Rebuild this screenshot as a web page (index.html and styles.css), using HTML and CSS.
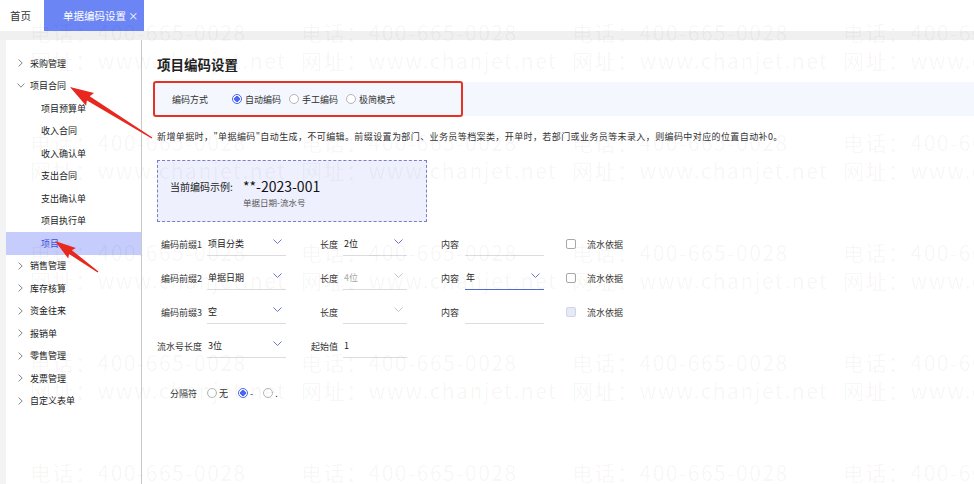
FILE: index.html
```html
<!DOCTYPE html>
<html lang="zh-CN">
<head>
  <meta charset="UTF-8">
  <title>单据编码设置</title>
  <link rel="stylesheet" href="styles.css">
</head>
<body>
  <div class="tabs">
    <div class="tab">首页</div>
    <div class="tab active">单据编码设置 <span class="close">×</span></div>
  </div>
  <div class="band"></div>

  <div class="layout">
    <div class="sidebar">
      <div class="menu-item"><svg class="chev" viewBox="0 0 5 8"><path d="M.6.6 4.2 4 .6 7.4"/></svg>采购管理</div>
      <div class="menu-item"><svg class="chev down" viewBox="0 0 8 5"><path d="M.6.6 4 4.2 7.4.6"/></svg>项目合同</div>
      <div class="menu-item sub">项目预算单</div>
      <div class="menu-item sub">收入合同</div>
      <div class="menu-item sub">收入确认单</div>
      <div class="menu-item sub">支出合同</div>
      <div class="menu-item sub">支出确认单</div>
      <div class="menu-item sub">项目执行单</div>
      <div class="menu-item sub active">项目</div>
      <div class="menu-item"><svg class="chev" viewBox="0 0 5 8"><path d="M.6.6 4.2 4 .6 7.4"/></svg>销售管理</div>
      <div class="menu-item"><svg class="chev" viewBox="0 0 5 8"><path d="M.6.6 4.2 4 .6 7.4"/></svg>库存核算</div>
      <div class="menu-item"><svg class="chev" viewBox="0 0 5 8"><path d="M.6.6 4.2 4 .6 7.4"/></svg>资金往来</div>
      <div class="menu-item"><svg class="chev" viewBox="0 0 5 8"><path d="M.6.6 4.2 4 .6 7.4"/></svg>报销单</div>
      <div class="menu-item"><svg class="chev" viewBox="0 0 5 8"><path d="M.6.6 4.2 4 .6 7.4"/></svg>零售管理</div>
      <div class="menu-item"><svg class="chev" viewBox="0 0 5 8"><path d="M.6.6 4.2 4 .6 7.4"/></svg>发票管理</div>
      <div class="menu-item"><svg class="chev" viewBox="0 0 5 8"><path d="M.6.6 4.2 4 .6 7.4"/></svg>自定义表单</div>
    </div>

    <div class="content">
      <h2 class="title">项目编码设置</h2>

      <div class="mode-row">
        <span class="mode-label">编码方式</span>
        <label class="radio checked"><i></i>自动编码</label>
        <label class="radio"><i></i>手工编码</label>
        <label class="radio"><i></i>极简模式</label>
      </div>

      <p class="desc">新增单据时，"单据编码"自动生成，不可编辑。前缀设置为部门、业务员等档案类，开单时，若部门或业务员等未录入，则编码中对应的位置自动补0。</p>

      <div class="example">
        <div class="example-main"><span class="example-label">当前编码示例:</span><span class="example-value">**-2023-001</span></div>
        <div class="example-sub">单据日期-流水号</div>
      </div>

      <div class="form">
        <div class="form-row">
          <span class="lbl">编码前缀1</span>
          <div class="field">项目分类<svg class="arrow" viewBox="0 0 9 5"><path d="M.5.5 4.5 4.5 8.5.5"/></svg></div>
          <span class="lbl lbl2">长度</span>
          <div class="field short">2位<svg class="arrow" viewBox="0 0 9 5"><path d="M.5.5 4.5 4.5 8.5.5"/></svg></div>
          <span class="lbl lbl3">内容</span>
          <div class="field"></div>
          <span class="check"></span><span>流水依据</span>
        </div>
        <div class="form-row">
          <span class="lbl">编码前缀2</span>
          <div class="field">单据日期<svg class="arrow" viewBox="0 0 9 5"><path d="M.5.5 4.5 4.5 8.5.5"/></svg></div>
          <span class="lbl lbl2">长度</span>
          <div class="field short disabled">4位<svg class="arrow" viewBox="0 0 9 5"><path d="M.5.5 4.5 4.5 8.5.5"/></svg></div>
          <span class="lbl lbl3">内容</span>
          <div class="field focus">年<svg class="arrow" viewBox="0 0 9 5"><path d="M.5.5 4.5 4.5 8.5.5"/></svg></div>
          <span class="check"></span><span>流水依据</span>
        </div>
        <div class="form-row">
          <span class="lbl">编码前缀3</span>
          <div class="field">空<svg class="arrow" viewBox="0 0 9 5"><path d="M.5.5 4.5 4.5 8.5.5"/></svg></div>
          <span class="lbl lbl2">长度</span>
          <div class="field short disabled"><span></span><svg class="arrow" viewBox="0 0 9 5"><path d="M.5.5 4.5 4.5 8.5.5"/></svg></div>
          <span class="lbl lbl3">内容</span>
          <div class="field"></div>
          <span class="check disabled"></span><span>流水依据</span>
        </div>
        <div class="form-row">
          <span class="lbl">流水号长度</span>
          <div class="field">3位<svg class="arrow" viewBox="0 0 9 5"><path d="M.5.5 4.5 4.5 8.5.5"/></svg></div>
          <span class="lbl lbl2">起始值</span>
          <div class="field short">1</div>
        </div>
        <div class="sep-row">
          <span class="sep-label">分隔符</span>
          <label class="radio"><i></i>无</label>
          <label class="radio checked"><i></i>-</label>
          <label class="radio"><i></i>.</label>
        </div>
      </div>
    </div>
  </div>

  <div class="watermark" id="watermark"></div>

  <div class="red-box"></div>
  <svg class="arrows" viewBox="0 0 974 484">
    <g transform="translate(152 138) rotate(211.9)">
      <polygon points="0,-0.7 75,-2.6 73,-7.5 96.6,0 73,7.5 75,2.6 0,0.7"/>
    </g>
    <g transform="translate(98 272) rotate(215.8)">
      <polygon points="0,-0.7 34,-2.4 32,-6.5 53,0 32,6.5 34,2.4 0,0.7"/>
    </g>
  </svg>

  <script>
    const wm = document.getElementById("watermark");
    for (let i = 0; i < 20; i++) {
      const cell = document.createElement("div");
      cell.className = "wm-cell";
      cell.innerHTML = "<div>电话：400-665-0028</div><div>网址：www.chanjet.net</div>";
      wm.appendChild(cell);
    }
  </script>
</body>
</html>
```

FILE: styles.css
```css
body {
  margin: 0;
  width: 974px;
  height: 484px;
  overflow: hidden;
  position: relative;
  font-family: "Noto Sans CJK SC", "Microsoft YaHei", sans-serif;
  font-size: 9px;
  color: #333;
  background-color: #f3f3f3;
}

.tabs {
  height: 31px;
  background-color: #fff;
  display: flex;
}

.tab {
  padding: 0 13px 0 10px;
  line-height: 31px;
  font-size: 10.5px;
  color: #333;
  white-space: nowrap;
}

.tab.active {
  width: 100px;
  box-sizing: border-box;
  padding: 0 0 0 19px;
  background-color: #6b85f5;
  color: #fff;
}

.tab .close {
  font-size: 10px;
}

.band {
  height: 9px;
  background-color: #f0f0f0;
}

.layout {
  display: flex;
  height: 444px;
}

.sidebar {
  margin-left: 6px;
  width: 135px;
  background-color: #fff;
  border-right: 1px solid #c9c9c9;
  padding-top: 12px;
}

.menu-item {
  height: 22.5px;
  display: flex;
  align-items: center;
  padding-left: 12px;
  color: #222;
}

.chev {
  width: 5px;
  height: 8px;
  margin-right: 7px;
  fill: none;
  stroke: #777;
  stroke-width: 0.9;
}

.chev.down {
  width: 8px;
  height: 5px;
  margin-left: -1px;
  margin-right: 5px;
}

.menu-item.sub {
  padding-left: 35px;
}

.menu-item.sub.active {
  background-color: #c6ccfb;
  color: #3f51d9;
}

.content {
  flex: 1;
  background-color: #fff;
  padding: 14px 0 0 15px;
}

.title {
  margin: 0;
  font-size: 13.5px;
  line-height: 20px;
  font-weight: bold;
  color: #222;
}

.mode-row {
  margin: 8px 0 0 -2px;
  height: 34px;
  background-color: #f4f7fe;
  display: flex;
  align-items: center;
  padding-left: 17px;
}

.mode-label {
  width: 60px;
}

.radio {
  display: inline-flex;
  align-items: center;
  margin-right: 8px;
}

.radio i {
  width: 10px;
  height: 10px;
  box-sizing: border-box;
  border: 1px solid #b5b5b5;
  border-radius: 50%;
  margin-right: 3px;
  background-color: #fff;
}

.radio.checked i {
  border-color: #4a67f2;
  background: radial-gradient(circle, #4a67f2 0 2.6px, #fff 3px);
}

.desc {
  margin: 14px 0 0;
  line-height: 14px;
  letter-spacing: 0.4px;
  color: #333;
}

.example {
  margin-top: 16px;
  width: 270px;
  height: 62px;
  box-sizing: border-box;
  border: 1px dashed #7a7ec8;
  background-color: #eef0fd;
  padding: 15px 0 0 12px;
}

.example-main {
  height: 20px;
  display: flex;
  align-items: center;
}

.example-label {
  width: 73px;
  font-size: 10px;
  color: #222;
}

.example-value {
  font-size: 14px;
  color: #111;
}

.example-sub {
  margin-left: 73px;
  line-height: 12px;
  font-size: 8.5px;
  color: #555;
}

.form {
  margin-top: 10px;
}

.form-row {
  display: flex;
  align-items: center;
  height: 24px;
  margin-bottom: 10px;
}

.lbl {
  width: 45px;
  margin-right: 5px;
  text-align: right;
  white-space: nowrap;
}

.lbl2 {
  width: 52px;
}

.lbl3 {
  width: 52px;
  margin-right: 6px;
}

.field {
  width: 79px;
  height: 24px;
  box-sizing: border-box;
  border-bottom: 1px solid #dcdcdc;
  display: flex;
  align-items: center;
  justify-content: space-between;
  padding: 0 4px 0 1px;
  color: #222;
}

.field.short {
  width: 64px;
}

.field.disabled {
  color: #aaa;
}

.field.focus {
  border-bottom-color: #5468d4;
}

.arrow {
  width: 9px;
  height: 5px;
  margin-top: -5px;
  fill: none;
  stroke: #6e73d6;
  stroke-width: 1;
}

.field.disabled .arrow {
  stroke: #c4c4c4;
}

.check {
  width: 10px;
  height: 10px;
  box-sizing: border-box;
  border: 1px solid #a8a8a8;
  border-radius: 2px;
  margin: 0 11px 0 22px;
}

.check.disabled {
  border-color: #d0d4e4;
  background-color: #e6e9f6;
}

.sep-row {
  display: flex;
  align-items: center;
  height: 20px;
  margin-top: 25px;
}

.sep-label {
  width: 40px;
  margin-right: 10px;
  text-align: right;
}

.sep-row .radio {
  margin-right: 10px;
}

.sep-row .radio i {
  margin-right: 2px;
}

.watermark {
  position: absolute;
  left: 30px;
  top: 18px;
  right: 0;
  bottom: 0;
  display: grid;
  grid-template-columns: repeat(4, 271px);
  grid-auto-rows: 110px;
  font-size: 21px;
  line-height: 28px;
  letter-spacing: 1.5px;
  color: rgba(0, 0, 0, 0.045);
  white-space: nowrap;
  overflow: hidden;
  pointer-events: none;
}

.red-box {
  position: absolute;
  left: 153px;
  top: 81px;
  width: 310px;
  height: 36px;
  box-sizing: border-box;
  border: 2px solid #e53225;
  border-radius: 3px;
  pointer-events: none;
}

.arrows {
  position: absolute;
  left: 0;
  top: 0;
  width: 974px;
  height: 484px;
  fill: #e8281e;
  pointer-events: none;
}
```
